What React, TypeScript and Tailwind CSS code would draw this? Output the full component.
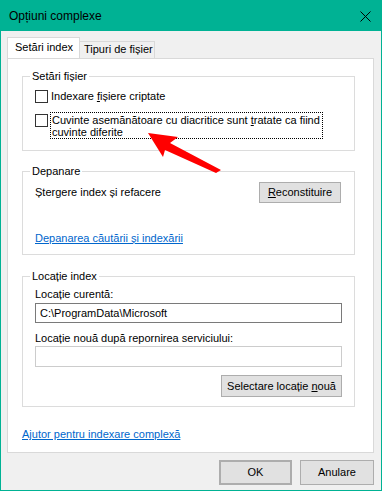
import React from 'react';

const font = { fontFamily: '"Liberation Sans", Arial, sans-serif' };

const Btn: React.FC<{ className?: string; children: React.ReactNode }> = ({ className = '', children }) => (
  <button className={`flex items-center justify-center whitespace-nowrap bg-[#e1e1e1] border border-[#adadad] text-[11px] text-black ${className}`}>
    {children}
  </button>
);

const Group: React.FC<{ title: string; className?: string; children: React.ReactNode }> = ({ title, className = '', children }) => (
  <fieldset className={`w-[333px] border border-[#dcdcdc] ${className}`}>
    <legend className="ml-[7px] px-[2px] text-[11px] leading-[15px]">{title}</legend>
    {children}
  </fieldset>
);

export default function App() {
  return (
    <div style={font} className="w-[382px] h-[491px] bg-[#00b294] flex flex-col text-[11px] text-black whitespace-nowrap">
      {/* title bar */}
      <div className="h-[31px] flex items-center justify-between pl-[9px] pr-[11px] shrink-0">
        <span className="text-[12px] text-black">Opțiuni complexe</span>
        <svg width="11" height="11" viewBox="0 0 11 11" className="mt-[1px]">
          <path d="M0.5 0.5 L10.5 10.5 M10.5 0.5 L0.5 10.5" stroke="#000" strokeWidth="1" />
        </svg>
      </div>

      {/* body */}
      <div className="relative flex-1 mx-[1px] mb-[1px] bg-[#f0f0f0] flex flex-col pl-[6px] pr-[7px] pt-[7px]">
        {/* tabs */}
        <div className="flex items-end h-[20px] relative z-10">
          <div className="h-[21px] w-[73px] bg-white border border-b-0 border-[#d9d9d9] pl-[7px] leading-[18px]">Setări index</div>
          <div className="h-[17px] w-[75px] bg-[#f0f0f0] border border-l-0 border-b-0 border-[#d9d9d9] pl-[4px] leading-[15px]">Tipuri de fișier</div>
        </div>

        {/* panel */}
        <div className="h-[395px] bg-white border border-[#d9d9d9] pl-[14px] flex flex-col">
          <Group title="Setări fișier" className="mt-[10px] h-[82px]">
            <div className="pl-[12px] pt-[6px] flex flex-col">
              <label className="flex items-center h-[13px]">
                <span className="w-[13px] h-[13px] border border-[#333] bg-white shrink-0" />
                <span className="ml-[3px] leading-[15px]">Indexare <span className="underline">f</span>ișiere criptate</span>
              </label>
              <label className="flex items-start mt-[10px]">
                <span className="w-[13px] h-[13px] mt-[1px] border border-[#333] bg-white shrink-0" />
                <span className="ml-[2px] -mt-[1px] w-[273px] h-[27px] border border-dotted border-black pl-[1px] leading-[12px] pt-[1px]">
                  Cuvinte asemănătoare cu diacritice sunt <span className="underline">t</span>ratate ca fiind<br />cuvinte diferite
                </span>
              </label>
            </div>
          </Group>

          <Group title="Depanare" className="mt-[13px] h-[91px]">
            <div className="pl-[12px] pr-[13px] pt-[3px] flex items-center justify-between">
              <span>Ștergere index și refacere</span>
              <Btn className="w-[82px] h-[21px]"><span><span className="underline">R</span>econstituire</span></Btn>
            </div>
            <div className="pl-[12px] mt-[28px] leading-[15px]">
              <a className="text-[#0066cc] underline">Depanarea căutării și indexării</a>
            </div>
          </Group>

          <Group title="Locație index" className="mt-[14px] h-[138px]">
            <div className="pl-[12px] pr-[12px] pt-[3px] flex flex-col">
              <span className="leading-[15px]">Locație curentă:</span>
              <div className="mt-[1px] h-[20px] border border-[#7a7a7a] pl-[4px] flex items-center">C:\ProgramData\Microsoft</div>
              <span className="mt-[8px] leading-[15px]">Locație nouă după repornirea serviciului:</span>
              <div className="h-[21px] border border-[#cccccc]" />
              <div className="flex justify-end mt-[8px]">
                <Btn className="w-[121px] h-[22px]"><span>Selectare locație <span className="underline">n</span>ouă</span></Btn>
              </div>
            </div>
          </Group>

          <a className="mt-[20px] self-start text-[#0066cc] underline leading-[15px]">Ajutor pentru indexare complexă</a>
        </div>

        {/* bottom buttons */}
        <div className="flex justify-end gap-[8px] mt-[7px]">
          <Btn className="w-[73px] h-[25px] border-2 border-[#0078d7]">OK</Btn>
          <Btn className="w-[74px] h-[25px]">Anulare</Btn>
        </div>

        {/* red arrow annotation */}
        <svg className="absolute left-0 top-0 pointer-events-none" width="380" height="460" viewBox="1 31 380 460">
          <polygon points="148,133 178,137 170,143 221,170 216,173 165,150 163,157" fill="#ff0000" />
        </svg>
      </div>
    </div>
  );
}
